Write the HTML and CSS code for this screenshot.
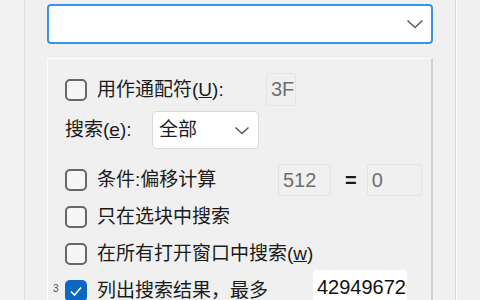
FILE: index.html
```html
<!DOCTYPE html>
<html lang="zh-CN">
<head>
  <meta charset="UTF-8">
  <title>搜索</title>
  <link rel="stylesheet" href="styles.css">
</head>
<body>
  <div class="window">
    <div class="side-left"></div>

    <div class="main">
      <div class="combo main-combo">
        <span class="combo-value"></span>
        <svg class="chevron" width="18" height="10" viewBox="0 0 18 10"><polyline points="1.5,1.5 9,8.5 16.5,1.5" fill="none" stroke="#5c5c5c" stroke-width="1.6"/></svg>
      </div>

      <div class="panel">
        <!-- wildcard -->
        <div class="row row-wild">
          <span class="check"></span>
          <span class="label">用作通配符(<u>U</u>):</span>
          <span class="field disabled field-wild">3F</span>
        </div>

        <div class="row row-search">
          <span class="label">搜索(<u>e</u>):</span>
          <div class="combo small-combo">
            <span class="combo-value">全部</span>
            <svg class="chevron" width="16" height="9" viewBox="0 0 16 9"><polyline points="1.5,1.5 8,7.5 14.5,1.5" fill="none" stroke="#5c5c5c" stroke-width="1.5"/></svg>
          </div>
        </div>

        <div class="row row-cond">
          <span class="check"></span>
          <span class="label">条件:偏移计算</span>
          <span class="field disabled field-mod">512</span>
          <span class="equals">=</span>
          <span class="field disabled field-rem">0</span>
        </div>

        <div class="row row-plain">
          <span class="check"></span>
          <span class="label">只在选块中搜索</span>
        </div>

        <div class="row row-plain">
          <span class="check"></span>
          <span class="label">在所有打开窗口中搜索(<u>w</u>)</span>
        </div>

        <div class="row row-list">
          <span class="marker">3</span>
          <span class="check checked">
            <svg width="22" height="22" viewBox="0 0 22 22"><polyline points="6,11.5 9.5,15 16,7.5" fill="none" stroke="#fff" stroke-width="1.6"/></svg>
          </span>
          <span class="label">列出搜索结果，最多</span>
          <span class="field field-max">4294967295</span>
        </div>
      </div>
    </div>

    <div class="side-right"></div>
  </div>
</body>
</html>
```

FILE: styles.css
```css
body {
  margin: 0;
  padding: 0;
  background-color: #f0f0f0;
  font-family: "Liberation Sans", "Noto Sans CJK SC", sans-serif;
  font-size: 19px;
  color: #1b1b1b;
  overflow: hidden;
}

.window {
  display: flex;
  height: 300px;
}

.side-left {
  width: 24px;
  border-right: 1px solid #dcdcdc;
  background-color: #f2f2f2;
}

.main {
  width: 408px;
  padding-left: 22px;
  border-right: 1px solid #d6d6d6;
}

.side-right {
  flex: 1;
  border-left: 1px solid #fafafa;
}

.combo {
  display: flex;
  align-items: center;
  box-sizing: border-box;
  background-color: #fff;
}

.combo-value {
  flex: 1;
}

.main-combo {
  width: 386px;
  height: 40px;
  margin-top: 4px;
  border: 2px solid #3d92e3;
  border-radius: 4px;
  padding-right: 7px;
}

.panel {
  width: 386px;
  height: 260px;
  box-sizing: border-box;
  margin-top: 14px;
  padding: 12px 0 0 17px;
  border: 1px solid;
  border-color: #fcfcfc #d2d2d2 #d2d2d2 #fcfcfc;
  border-right-width: 2px;
  overflow: hidden;
}

.row {
  display: flex;
  align-items: center;
  height: 36px;
  line-height: 22px;
  white-space: nowrap;
}

.row-wild {
  height: 37px;
}

.row-search {
  height: 38px;
  margin-top: 3px;
}

.row-cond {
  margin-top: 13px;
}

.row-plain,
.row-list {
  margin-top: 1px;
}

.check {
  width: 22px;
  height: 22px;
  box-sizing: border-box;
  flex: none;
  border: 2px solid #676767;
  border-radius: 5px;
  background-color: #f5f5f5;
  margin-right: 10px;
}

.check.checked {
  border: none;
  background-color: #0a67c2;
}

.check svg {
  display: block;
}

.label {
  flex: none;
}

.row-wild .label {
  width: 169px;
}

.row-search .label {
  width: 87px;
}

.row-cond .label {
  width: 181px;
}

.row-list .label {
  width: 216px;
}

.field {
  box-sizing: border-box;
  font-size: 20px;
  line-height: 30px;
  padding-left: 4px;
  overflow: hidden;
  flex: none;
}

.field.disabled {
  color: #6f6f6f;
  border: 1px solid #e4e4e4;
  border-radius: 3px;
  background-color: #f0f0f0;
}

.field-wild {
  width: 30px;
  height: 33px;
}

.field-mod {
  width: 53px;
  height: 32px;
}

.equals {
  margin: 0 10px 0 14px;
  font-size: 20px;
  font-weight: bold;
}

.field-rem {
  width: 55px;
  height: 32px;
}

.field-max {
  align-self: flex-start;
  width: 94px;
  height: 36px;
  margin-top: -3px;
  padding-top: 2px;
  background-color: #fff;
  color: #111;
  border-radius: 2px 2px 0 0;
}

.small-combo {
  width: 107px;
  height: 38px;
  border: 1px solid #dadada;
  border-radius: 4px;
  padding: 0 8px 0 6px;
}

.marker {
  position: absolute;
  left: 53px;
  font-size: 10px;
  color: #555;
  margin-top: -4px;
}
```
